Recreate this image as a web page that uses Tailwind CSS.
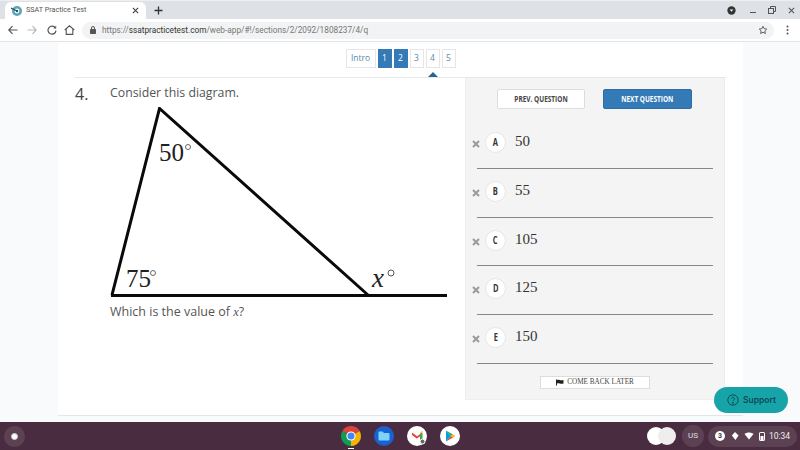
<!DOCTYPE html>
<html lang="en">
<head>
  <meta charset="UTF-8" />
  <title>SSAT Practice Test</title>
  <script src="https://cdn.jsdelivr.net/npm/@tailwindcss/browser@4"></script>
</head>
<body class="w-[800px] h-[450px] overflow-hidden flex flex-col bg-[#f9fafb] font-['Open_Sans',sans-serif] text-[#4a4a4a]">

<!-- Tab strip -->
<div class="h-[19px] bg-[#dee1e6] border-t border-[#eceef0] flex items-end shrink-0 font-['Roboto',sans-serif]">
  <div class="ml-[5px] w-[141px] h-[17px] bg-white rounded-t-md flex items-center pl-[6px] pr-[7px] gap-[3px]">
    <svg width="12" height="12" viewBox="0 0 12 12"><circle cx="6" cy="6" r="5" fill="#5ba4b5"/><circle cx="6" cy="6" r="2.4" fill="#fff"/><circle cx="6" cy="6" r="1.2" fill="#27505c"/><path d="M0 3 L6 6" stroke="#27505c" stroke-width="1.2"/></svg>
    <span class="text-[7.2px] text-[#555] flex-1">SSAT Practice Test</span>
    <svg width="7" height="7" viewBox="0 0 8 8"><path d="M1 1L7 7M7 1L1 7" stroke="#444" stroke-width="1.3"/></svg>
  </div>
  <svg class="ml-[8px] mb-[4px]" width="9" height="9" viewBox="0 0 9 9"><path d="M4.5 0.5V8.5M0.5 4.5H8.5" stroke="#333" stroke-width="1.3"/></svg>
  <div class="ml-auto flex items-center h-[18px] pr-[5.5px]">
    <svg width="9" height="9" viewBox="0 0 10 10"><circle cx="5" cy="5" r="4.6" fill="#333"/><path d="M3 4H7L5 6.5Z" fill="#fff"/></svg>
    <span class="ml-[14.5px] w-[6px] h-px bg-[#555] mt-[5px]"></span>
    <svg class="ml-[12px]" width="8" height="8" viewBox="0 0 8 8" fill="none" stroke="#555"><rect x="0.5" y="2.5" width="5" height="5"/><path d="M2.5 2.5V0.5H7.5V5.5H5.5"/></svg>
    <svg class="ml-[11.5px]" width="7" height="7" viewBox="0 0 8 8"><path d="M1 1L7 7M7 1L1 7" stroke="#555" stroke-width="1.2"/></svg>
  </div>
</div>

<!-- Toolbar -->
<div class="h-[23px] bg-white border-b border-[#e3e4e6] flex items-center shrink-0 font-['Roboto',sans-serif]">
  <svg class="ml-[8px]" width="10" height="10" viewBox="0 0 10 10" fill="none" stroke="#555" stroke-width="1.2"><path d="M9.5 5H1M4.5 1.2L0.8 5L4.5 8.8"/></svg>
  <svg class="ml-[9px]" width="10" height="10" viewBox="0 0 10 10" fill="none" stroke="#b5b8bc" stroke-width="1.2"><path d="M0.5 5H9M5.5 1.2L9.2 5L5.5 8.8"/></svg>
  <svg class="ml-[10px]" width="10" height="10" viewBox="0 0 10 10" fill="none" stroke="#555" stroke-width="1.2"><path d="M8.4 3A4 4 0 1 0 9 5.6"/><path d="M9.2 0.8V3.4H6.4Z" fill="#555" stroke="none"/></svg>
  <svg class="ml-[7px]" width="11" height="10" viewBox="0 0 11 10" fill="none" stroke="#555" stroke-width="1.1"><path d="M0.7 5L5.5 0.8L10.3 5M2.2 4V9.4H8.8V4"/></svg>
  <div class="ml-[7px] w-[692px] h-[17px] rounded-full bg-[#f1f3f4] flex items-center pl-[8px]">
    <svg width="6" height="8" viewBox="0 0 6 8"><rect y="3" width="6" height="5" rx="0.8" fill="#555"/><path d="M1.5 3.5V2a1.5 1.5 0 0 1 3 0v1.5" fill="none" stroke="#555"/></svg>
    <span class="ml-[6px] text-[8.25px] text-[#777] whitespace-nowrap">https://<span class="text-[#333]">ssatpracticetest.com</span>/web-app/#!/sections/2/2092/1808237/4/q</span>
    <svg class="ml-auto mr-[6px]" width="10" height="10" viewBox="0 0 24 24" fill="none" stroke="#444" stroke-width="2"><path d="M12 3l2.8 5.8 6.2.9-4.5 4.4 1.1 6.3-5.6-3-5.6 3 1.1-6.3L3 9.7l6.2-.9z"/></svg>
  </div>
  <svg class="ml-[11.5px]" width="3" height="10" viewBox="0 0 3 10" fill="#555"><circle cx="1.5" cy="1.5" r="1"/><circle cx="1.5" cy="5" r="1"/><circle cx="1.5" cy="8.5" r="1"/></svg>
</div>

<!-- Page -->
<div class="flex-1 relative">
  <div class="ml-[58px] w-[685px] h-[374px] bg-white border-b border-[#e3e5e8]">
    <!-- Section nav -->
    <div class="relative h-[35px] pt-[7px] flex justify-center gap-[2px] text-[8.5px] text-[#5b8aa6]">
      <span class="h-[19px] w-[30px] border border-[#e6e6e6] flex items-center justify-center">Intro</span>
      <span class="h-[19px] w-[14px] bg-[#337ab7] text-white flex items-center justify-center">1</span>
      <span class="h-[19px] w-[14px] bg-[#337ab7] text-white flex items-center justify-center">2</span>
      <span class="h-[19px] w-[14px] border border-[#e6e6e6] flex items-center justify-center">3</span>
      <span class="relative h-[19px] w-[14px] border border-[#e6e6e6] flex items-center justify-center">4
        <span class="absolute top-[22px] left-[1px] w-0 h-0 border-x-[5px] border-x-transparent border-b-[5px] border-b-[#2a6496]"></span>
      </span>
      <span class="h-[19px] w-[14px] border border-[#e6e6e6] flex items-center justify-center">5</span>
    </div>

    <div class="mx-[17px] border-t border-[#e8e8e8] flex">
      <!-- Question -->
      <div class="w-[390px] shrink-0">
        <div class="flex h-[29px]">
          <span class="w-[35px] text-[16px] leading-[32px] text-[#444]">4.</span>
          <span class="text-[12.3px] leading-[30px] text-[#555]">Consider this diagram.</span>
        </div>
        <svg class="block" width="390" height="192" viewBox="75 107 390 192" fill="none">
          <path d="M112 295L159.5 108.5L368 295" stroke="#0a0a0a" stroke-width="3" stroke-linejoin="miter"/>
          <path d="M111 295.5H447" stroke="#0a0a0a" stroke-width="3"/>
          <text x="159" y="161" font-family="Liberation Serif" font-size="25" fill="#222">50</text>
          <circle cx="188" cy="147" r="2.5" stroke="#444" stroke-width="0.8"/>
          <text x="126" y="287" font-family="Liberation Serif" font-size="25" fill="#222">75</text>
          <circle cx="153" cy="273" r="2.5" stroke="#444" stroke-width="0.8"/>
          <text x="372" y="287" font-family="Liberation Serif" font-style="italic" font-size="27" fill="#222">x</text>
          <circle cx="391" cy="273" r="3" stroke="#444" stroke-width="0.9"/>
        </svg>
        <p class="ml-[35px] mt-px text-[12.5px] leading-[24px] text-[#555]">Which is the value of <span class="font-['Liberation_Serif',serif] italic">x</span>?</p>
      </div>

      <!-- Answers -->
      <div class="w-[260px] h-[322px] bg-[#f4f4f4] border border-[#eeeeee] border-t-0 px-[11px]">
        <div class="pt-[11px] flex justify-center gap-[18px] -ml-[1px]">
          <span class="w-[88px] h-[20px] bg-white border border-[#ddd] rounded-[2px] text-[9px] font-bold text-[#444] flex items-center justify-center"><span class="whitespace-nowrap scale-x-[.72]">PREV. QUESTION</span></span>
          <span class="w-[89px] h-[20px] bg-[#337ab7] border border-[#2e6da4] rounded-[2px] text-[9px] font-bold text-white flex items-center justify-center"><span class="whitespace-nowrap scale-x-[.72]">NEXT QUESTION</span></span>
        </div>

        <div class="mt-[11px] flex flex-col font-['Liberation_Serif',serif]">
          <div class="h-[48.75px] border-b border-[#888] flex items-start">
            <svg class="-ml-[5px] mt-[20px]" width="8" height="8" viewBox="0 0 8 8"><path d="M1 1L7 7M7 1L1 7" stroke="#9a9a9a" stroke-width="2"/></svg>
            <span class="ml-[5px] mt-[12px] w-[21px] h-[21px] rounded-full bg-white border border-[#e5e5e5] flex items-center justify-center text-[10px] font-bold text-[#333] font-['Open_Sans',sans-serif]"><span class="scale-x-[.75]">A</span></span>
            <span class="ml-[9px] mt-[12px] text-[15px] leading-[19px] text-[#333]">50</span>
          </div>
          <div class="h-[48.75px] border-b border-[#888] flex items-start">
            <svg class="-ml-[5px] mt-[20px]" width="8" height="8" viewBox="0 0 8 8"><path d="M1 1L7 7M7 1L1 7" stroke="#9a9a9a" stroke-width="2"/></svg>
            <span class="ml-[5px] mt-[12px] w-[21px] h-[21px] rounded-full bg-white border border-[#e5e5e5] flex items-center justify-center text-[10px] font-bold text-[#333] font-['Open_Sans',sans-serif]"><span class="scale-x-[.75]">B</span></span>
            <span class="ml-[9px] mt-[12px] text-[15px] leading-[19px] text-[#333]">55</span>
          </div>
          <div class="h-[48.75px] border-b border-[#888] flex items-start">
            <svg class="-ml-[5px] mt-[20px]" width="8" height="8" viewBox="0 0 8 8"><path d="M1 1L7 7M7 1L1 7" stroke="#9a9a9a" stroke-width="2"/></svg>
            <span class="ml-[5px] mt-[12px] w-[21px] h-[21px] rounded-full bg-white border border-[#e5e5e5] flex items-center justify-center text-[10px] font-bold text-[#333] font-['Open_Sans',sans-serif]"><span class="scale-x-[.75]">C</span></span>
            <span class="ml-[9px] mt-[12px] text-[15px] leading-[19px] text-[#333]">105</span>
          </div>
          <div class="h-[48.75px] border-b border-[#888] flex items-start">
            <svg class="-ml-[5px] mt-[20px]" width="8" height="8" viewBox="0 0 8 8"><path d="M1 1L7 7M7 1L1 7" stroke="#9a9a9a" stroke-width="2"/></svg>
            <span class="ml-[5px] mt-[12px] w-[21px] h-[21px] rounded-full bg-white border border-[#e5e5e5] flex items-center justify-center text-[10px] font-bold text-[#333] font-['Open_Sans',sans-serif]"><span class="scale-x-[.75]">D</span></span>
            <span class="ml-[9px] mt-[12px] text-[15px] leading-[19px] text-[#333]">125</span>
          </div>
          <div class="h-[48.75px] border-b border-[#888] flex items-start">
            <svg class="-ml-[5px] mt-[20px]" width="8" height="8" viewBox="0 0 8 8"><path d="M1 1L7 7M7 1L1 7" stroke="#9a9a9a" stroke-width="2"/></svg>
            <span class="ml-[5px] mt-[12px] w-[21px] h-[21px] rounded-full bg-white border border-[#e5e5e5] flex items-center justify-center text-[10px] font-bold text-[#333] font-['Open_Sans',sans-serif]"><span class="scale-x-[.75]">E</span></span>
            <span class="ml-[9px] mt-[12px] text-[15px] leading-[19px] text-[#333]">150</span>
          </div>
        </div>

        <div class="mt-[12px] mx-auto w-[110px] h-[13px] bg-white border border-[#ddd] flex items-center justify-center gap-[3px] font-['Liberation_Serif',serif] text-[7.2px] text-[#444]">
          <svg width="8" height="7" viewBox="0 0 8 7"><path d="M0.5 0.5V6.5" stroke="#222"/><path d="M1 1C3 0 4 2 7.5 1V4.5C4 5.5 3 3.5 1 4.5Z" fill="#222"/></svg>
          COME BACK LATER
        </div>
      </div>
    </div>
  </div>

  <!-- Support button floats over the page -->
  <div class="absolute left-[714px] top-[345px] w-[74px] h-[26px] rounded-full bg-[#17a4a8] flex items-center pl-[13px] gap-[4px] font-['Inter',sans-serif] text-[8.5px] font-semibold text-[#0c4a55]">
    <svg width="12" height="12" viewBox="0 0 12 12" fill="none" stroke="#0c4a55"><circle cx="6" cy="6" r="5.2"/><path d="M4.5 4.7a1.5 1.5 0 1 1 2.3 1.3c-.6.4-.8.6-.8 1.2" stroke-width="1"/><circle cx="6" cy="8.8" r="0.5" fill="#0c4a55"/></svg>
    Support
  </div>
</div>

<!-- Shelf -->
<div class="h-[28px] shrink-0 bg-[#4a2c40] grid grid-cols-3 items-center font-['Roboto',sans-serif]">
  <div class="pl-[4px]">
    <div class="w-[21px] h-[21px] rounded-full bg-white/10 flex items-center justify-center">
      <span class="w-[7px] h-[7px] rounded-full bg-white border border-[#ccc]"></span>
    </div>
  </div>

  <div class="flex justify-center gap-[13px] pl-[2px]">
    <div class="relative w-[20px] h-[20px]">
      <svg width="20" height="20" viewBox="0 0 20 20">
        <path d="M10 10L1.34 5A10 10 0 0 1 18.66 5Z" fill="#db4437"/>
        <path d="M10 10L18.66 5A10 10 0 0 1 10 20Z" fill="#f4b400"/>
        <path d="M10 10L10 20A10 10 0 0 1 1.34 5Z" fill="#0f9d58"/>
        <circle cx="10" cy="10" r="4.6" fill="#fff"/><circle cx="10" cy="10" r="3.5" fill="#4285f4"/>
      </svg>
      <span class="absolute top-[22px] left-[7px] w-[6px] h-[1px] bg-white"></span>
    </div>
    <svg width="20" height="20" viewBox="0 0 20 20"><circle cx="10" cy="10" r="10" fill="#1a62d0"/><path d="M4.5 6.5a1 1 0 0 1 1-1H8.5l1.5 1.5h4.5a1 1 0 0 1 1 1V13.5a1 1 0 0 1-1 1h-9a1 1 0 0 1-1-1Z" fill="#7dd3fc"/></svg>
    <svg width="20" height="20" viewBox="0 0 20 20"><circle cx="10" cy="10" r="10" fill="#fff"/><path d="M5 14V7L10 10.5V12.5L5 8.5Z" fill="#d93025"/><path d="M5 6.5L10 10.5L15 6.5V9L10 12.5L5 9Z" fill="#ea4335"/><path d="M13 8.5L15.5 6.5V14H13Z" fill="#34a853"/><path d="M13 8L15.5 6L15 5L13 6.5Z" fill="#fbbc04"/><circle cx="15.5" cy="15.5" r="2.5" fill="#666" stroke="#fff"/></svg>
    <svg width="20" height="20" viewBox="0 0 20 20"><circle cx="10" cy="10" r="10" fill="#fff"/><path d="M6 4.5L11 10L6 15.5Z" fill="#00a0e3"/><path d="M6 4.5L13 8.5L11 10Z" fill="#34a853"/><path d="M6 15.5L13 11.5L11 10Z" fill="#ea4335"/><path d="M13 8.5L15.5 10L13 11.5L11 10Z" fill="#fbbc04"/></svg>
  </div>

  <div class="flex items-center justify-end pr-[3px]">
    <div class="flex mr-[6px]">
      <span class="w-[18px] h-[18px] rounded-full bg-white"></span>
      <span class="-ml-[7px] w-[18px] h-[18px] rounded-full bg-[#eeeeee]"></span>
    </div>
    <span class="w-[22px] h-[22px] rounded-full bg-white/10 text-white/80 text-[8px] flex items-center justify-center">US</span>
    <div class="ml-[4px] w-[89px] h-[21px] rounded-full bg-white/10 flex items-center pl-[7px] text-white/90 text-[8.5px]">
      <span class="w-[10px] h-[10px] rounded-full bg-white text-[#4a2c40] text-[7px] font-bold flex items-center justify-center">3</span>
      <svg class="ml-[6px]" width="8" height="10" viewBox="0 0 9 10" fill="#fff"><path d="M4.5 0.5L8.5 4.5L5 9.5L3 7L1 4.5Z"/></svg>
      <svg class="ml-[5px]" width="10" height="8" viewBox="0 0 10 8" fill="#fff"><path d="M0.5 2C3 0 7 0 9.5 2L5 7.5Z"/></svg>
      <svg class="ml-[5px]" width="6" height="10" viewBox="0 0 6 10" fill="none" stroke="#fff"><rect x="0.5" y="1.5" width="5" height="8" rx="0.6"/><rect x="1.5" y="5" width="3" height="4" fill="#fff" stroke="none"/></svg>
      <span class="ml-[4px]">10:34</span>
    </div>
  </div>
</div>

</body>
</html>
